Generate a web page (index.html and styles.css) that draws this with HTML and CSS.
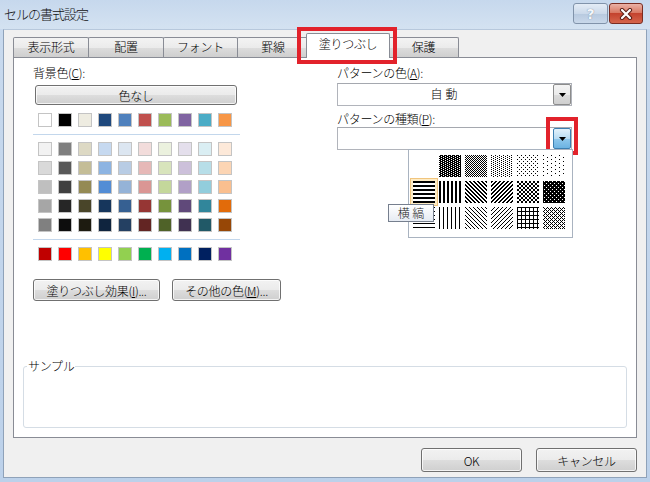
FILE: index.html
```html
<!DOCTYPE html>
<html lang="ja">
<head>
<meta charset="utf-8">
<title>セルの書式設定</title>
<link rel="stylesheet" href="styles.css">
</head>
<body>
<svg class="defs" width="0" height="0" aria-hidden="true">
  <defs>
    <pattern id="p75" width="4" height="2" patternUnits="userSpaceOnUse"><rect width="4" height="2" fill="#000"/><rect x="0" y="0" width="1" height="1" fill="#fff"/><rect x="2" y="1" width="1" height="1" fill="#fff"/></pattern>
    <pattern id="p50" width="2" height="2" patternUnits="userSpaceOnUse"><rect x="0" y="0" width="1" height="1" fill="#000"/><rect x="1" y="1" width="1" height="1" fill="#000"/></pattern>
    <pattern id="p25" width="4" height="2" patternUnits="userSpaceOnUse"><rect x="0" y="0" width="1" height="1" fill="#000"/><rect x="2" y="1" width="1" height="1" fill="#000"/></pattern>
    <pattern id="p12" width="4" height="4" patternUnits="userSpaceOnUse"><rect x="0" y="0" width="1" height="1" fill="#000"/><rect x="2" y="2" width="1" height="1" fill="#000"/></pattern>
    <pattern id="p6" width="8" height="4" patternUnits="userSpaceOnUse"><rect x="0" y="0" width="1" height="1" fill="#000"/><rect x="4" y="2" width="1" height="1" fill="#000"/></pattern>
    <pattern id="hs" width="4" height="4" patternUnits="userSpaceOnUse"><rect x="0" y="0" width="4" height="2" fill="#000"/></pattern>
    <pattern id="vs" width="4" height="4" patternUnits="userSpaceOnUse"><rect x="0" y="0" width="2" height="4" fill="#000"/></pattern>
    <pattern id="rd" width="4" height="4" patternUnits="userSpaceOnUse"><rect x="0" y="0" width="2" height="1" fill="#000"/><rect x="1" y="1" width="2" height="1" fill="#000"/><rect x="2" y="2" width="2" height="1" fill="#000"/><rect x="3" y="3" width="1" height="1" fill="#000"/><rect x="0" y="3" width="1" height="1" fill="#000"/></pattern>
    <pattern id="dd" width="4" height="4" patternUnits="userSpaceOnUse"><rect x="0" y="0" width="2" height="1" fill="#000"/><rect x="3" y="1" width="1" height="1" fill="#000"/><rect x="0" y="1" width="1" height="1" fill="#000"/><rect x="2" y="2" width="2" height="1" fill="#000"/><rect x="1" y="3" width="2" height="1" fill="#000"/></pattern>
    <pattern id="dc" width="4" height="4" patternUnits="userSpaceOnUse"><rect x="0" y="0" width="2" height="2" fill="#000"/><rect x="2" y="2" width="2" height="2" fill="#000"/></pattern>
    <pattern id="tdc" width="4" height="4" patternUnits="userSpaceOnUse"><rect width="4" height="4" fill="#000"/><rect x="1" y="0" width="1" height="1" fill="#fff"/><rect x="3" y="2" width="1" height="1" fill="#fff"/></pattern>
    <pattern id="ths" width="4" height="4" patternUnits="userSpaceOnUse"><rect x="0" y="0" width="4" height="1" fill="#000"/></pattern>
    <pattern id="tvs" width="4" height="4" patternUnits="userSpaceOnUse"><rect x="0" y="0" width="1" height="4" fill="#000"/></pattern>
    <pattern id="trd" width="4" height="4" patternUnits="userSpaceOnUse"><rect x="0" y="0" width="1" height="1" fill="#000"/><rect x="1" y="1" width="1" height="1" fill="#000"/><rect x="2" y="2" width="1" height="1" fill="#000"/><rect x="3" y="3" width="1" height="1" fill="#000"/></pattern>
    <pattern id="tdd" width="4" height="4" patternUnits="userSpaceOnUse"><rect x="3" y="0" width="1" height="1" fill="#000"/><rect x="2" y="1" width="1" height="1" fill="#000"/><rect x="1" y="2" width="1" height="1" fill="#000"/><rect x="0" y="3" width="1" height="1" fill="#000"/></pattern>
    <pattern id="thc" width="4" height="4" patternUnits="userSpaceOnUse"><rect x="0" y="0" width="4" height="1" fill="#000"/><rect x="0" y="0" width="1" height="4" fill="#000"/></pattern>
    <pattern id="tdx" width="4" height="4" patternUnits="userSpaceOnUse"><rect x="0" y="0" width="1" height="1" fill="#000"/><rect x="1" y="1" width="1" height="1" fill="#000"/><rect x="2" y="2" width="1" height="1" fill="#000"/><rect x="3" y="3" width="1" height="1" fill="#000"/><rect x="3" y="1" width="1" height="1" fill="#000"/><rect x="1" y="3" width="1" height="1" fill="#000"/></pattern>
  </defs>
</svg>

<div class="window">
  <div class="titlebar">
    <span class="title">セルの書式設定</span>
    <div class="caption-btns">
      <span class="cap help">?</span>
      <span class="cap close">
        <svg width="14" height="12" viewBox="0 0 14 12"><path d="M3 2 L11 10 M11 2 L3 10" stroke="#5a2018" stroke-width="4.2" stroke-linecap="round"/><path d="M3 2 L11 10 M11 2 L3 10" stroke="#fff" stroke-width="2.2" stroke-linecap="round"/></svg>
      </span>
    </div>
  </div>

  <div class="client">
    <div class="tabs">
      <div class="tab t1">表示形式</div>
      <div class="tab t2">配置</div>
      <div class="tab t3">フォント</div>
      <div class="tab t4">罫線</div>
      <div class="tab active">塗りつぶし<span class="callout tab-callout"></span></div>
      <div class="tab t6">保護</div>
    </div>

    <div class="panel">
      <div class="panel-grid">
        <div class="left-col">
          <div class="label">背景色(<u>C</u>):</div>
          <div class="btn btn-none">色なし</div>
          <div class="swatches theme">
            <span class="swatch" style="background:#FFFFFF"></span>
            <span class="swatch" style="background:#000000"></span>
            <span class="swatch" style="background:#EEECE1"></span>
            <span class="swatch" style="background:#1F497D"></span>
            <span class="swatch" style="background:#4F81BD"></span>
            <span class="swatch" style="background:#C0504D"></span>
            <span class="swatch" style="background:#9BBB59"></span>
            <span class="swatch" style="background:#8064A2"></span>
            <span class="swatch" style="background:#4BACC6"></span>
            <span class="swatch" style="background:#F79646"></span>
          </div>
          <div class="sep"></div>
          <div class="swatches tints">
            <span class="swatch" style="background:#F2F2F2"></span>
            <span class="swatch" style="background:#7F7F7F"></span>
            <span class="swatch" style="background:#DDD9C4"></span>
            <span class="swatch" style="background:#C6D9F0"></span>
            <span class="swatch" style="background:#DCE6F1"></span>
            <span class="swatch" style="background:#F2DCDB"></span>
            <span class="swatch" style="background:#EBF1DE"></span>
            <span class="swatch" style="background:#E4DFEC"></span>
            <span class="swatch" style="background:#DAEEF3"></span>
            <span class="swatch" style="background:#FDE9D9"></span>

            <span class="swatch" style="background:#D9D9D9"></span>
            <span class="swatch" style="background:#595959"></span>
            <span class="swatch" style="background:#C4BD97"></span>
            <span class="swatch" style="background:#8DB4E2"></span>
            <span class="swatch" style="background:#B8CCE4"></span>
            <span class="swatch" style="background:#E6B8B7"></span>
            <span class="swatch" style="background:#D8E4BC"></span>
            <span class="swatch" style="background:#CCC0DA"></span>
            <span class="swatch" style="background:#B7DEE8"></span>
            <span class="swatch" style="background:#FCD5B4"></span>

            <span class="swatch" style="background:#BFBFBF"></span>
            <span class="swatch" style="background:#404040"></span>
            <span class="swatch" style="background:#948A54"></span>
            <span class="swatch" style="background:#538DD5"></span>
            <span class="swatch" style="background:#95B3D7"></span>
            <span class="swatch" style="background:#DA9694"></span>
            <span class="swatch" style="background:#C4D79B"></span>
            <span class="swatch" style="background:#B1A0C7"></span>
            <span class="swatch" style="background:#92CDDC"></span>
            <span class="swatch" style="background:#FABF8F"></span>

            <span class="swatch" style="background:#A6A6A6"></span>
            <span class="swatch" style="background:#262626"></span>
            <span class="swatch" style="background:#494529"></span>
            <span class="swatch" style="background:#16365C"></span>
            <span class="swatch" style="background:#366092"></span>
            <span class="swatch" style="background:#963634"></span>
            <span class="swatch" style="background:#76933C"></span>
            <span class="swatch" style="background:#60497A"></span>
            <span class="swatch" style="background:#31869B"></span>
            <span class="swatch" style="background:#E26B0A"></span>

            <span class="swatch" style="background:#808080"></span>
            <span class="swatch" style="background:#0D0D0D"></span>
            <span class="swatch" style="background:#1D1B10"></span>
            <span class="swatch" style="background:#0F243E"></span>
            <span class="swatch" style="background:#244062"></span>
            <span class="swatch" style="background:#632523"></span>
            <span class="swatch" style="background:#4F6228"></span>
            <span class="swatch" style="background:#403151"></span>
            <span class="swatch" style="background:#215967"></span>
            <span class="swatch" style="background:#974706"></span>
          </div>
          <div class="sep"></div>
          <div class="swatches std">
            <span class="swatch" style="background:#C00000"></span>
            <span class="swatch" style="background:#FF0000"></span>
            <span class="swatch" style="background:#FFC000"></span>
            <span class="swatch" style="background:#FFFF00"></span>
            <span class="swatch" style="background:#92D050"></span>
            <span class="swatch" style="background:#00B050"></span>
            <span class="swatch" style="background:#00B0F0"></span>
            <span class="swatch" style="background:#0070C0"></span>
            <span class="swatch" style="background:#002060"></span>
            <span class="swatch" style="background:#7030A0"></span>
          </div>
          <div class="btn-row">
            <div class="btn btn-effect">塗りつぶし効果(<u>I</u>)...</div>
            <div class="btn btn-more">その他の色(<u>M</u>)...</div>
          </div>
        </div>

        <div class="right-col">
          <div class="label">パターンの色(<u>A</u>):</div>
          <div class="combo combo-color">
            <span class="combo-text">自動</span>
            <span class="dd"><svg width="7" height="4" viewBox="0 0 7 4"><path d="M0 0H7L3.5 4Z" fill="#000"/></svg></span>
          </div>
          <div class="label label-gap">パターンの種類(<u>P</u>):</div>
          <div class="combo combo-pattern">
            <span class="combo-text"></span>
            <span class="dd hot"><svg width="7" height="4" viewBox="0 0 7 4"><path d="M0 0H7L3.5 4Z" fill="#000"/></svg><span class="callout dd-callout"></span></span>
            <div class="popup">
              <div class="pat-grid">
                <span class="pat"></span>
                <span class="pat"><svg width="22" height="22"><rect width="22" height="22" fill="url(#p75)"/></svg></span>
                <span class="pat"><svg width="22" height="22"><rect width="22" height="22" fill="url(#p50)"/></svg></span>
                <span class="pat"><svg width="22" height="22"><rect width="22" height="22" fill="url(#p25)"/></svg></span>
                <span class="pat"><svg width="22" height="22"><rect width="22" height="22" fill="url(#p12)"/></svg></span>
                <span class="pat"><svg width="22" height="22"><rect width="22" height="22" fill="url(#p6)"/></svg></span>

                <span class="pat selected"><svg width="22" height="22"><rect width="22" height="22" fill="url(#hs)"/></svg></span>
                <span class="pat"><svg width="22" height="22"><rect width="22" height="22" fill="url(#vs)"/></svg></span>
                <span class="pat"><svg width="22" height="22"><rect width="22" height="22" fill="url(#rd)"/></svg></span>
                <span class="pat"><svg width="22" height="22"><rect width="22" height="22" fill="url(#dd)"/></svg></span>
                <span class="pat"><svg width="22" height="22"><rect width="22" height="22" fill="url(#dc)"/></svg></span>
                <span class="pat"><svg width="22" height="22"><rect width="22" height="22" fill="url(#tdc)"/></svg></span>

                <span class="pat"><svg width="22" height="22"><rect width="22" height="22" fill="url(#ths)"/></svg></span>
                <span class="pat"><svg width="22" height="22"><rect width="22" height="22" fill="url(#tvs)"/></svg></span>
                <span class="pat"><svg width="22" height="22"><rect width="22" height="22" fill="url(#trd)"/></svg></span>
                <span class="pat"><svg width="22" height="22"><rect width="22" height="22" fill="url(#tdd)"/></svg></span>
                <span class="pat"><svg width="22" height="22"><rect width="22" height="22" fill="url(#thc)"/></svg></span>
                <span class="pat"><svg width="22" height="22"><rect width="22" height="22" fill="url(#tdx)"/></svg></span>
              </div>
              <div class="tooltip">横 縞</div>
            </div>
          </div>
        </div>
      </div>

      <div class="sample">
        <span class="sample-label">サンプル</span>
      </div>
    </div>

    <div class="footer">
      <div class="btn btn-foot">OK</div>
      <div class="btn btn-foot">キャンセル</div>
    </div>
  </div>
</div>
</body>
</html>
```

FILE: styles.css
```css
html, body {
  margin: 0;
  padding: 0;
  background: #f0f0f0;
}

body {
  font-family: "Noto Sans CJK JP", "Noto Sans", sans-serif;
  font-size: 12px;
  font-weight: 300;
  color: #000;
}

.defs {
  display: block;
  width: 0;
  height: 0;
  overflow: hidden;
}

.window {
  width: 650px;
  height: 482px;
  box-sizing: border-box;
  padding: 0 3px 4px;
  background: linear-gradient(#c9daee, #bcd1ea);
  display: flex;
  flex-direction: column;
}

/* ---------- title bar ---------- */
.titlebar {
  height: 29px;
  flex: none;
  margin: 0 -3px;
  padding: 0 7px 0 4px;
  display: flex;
  justify-content: space-between;
  align-items: flex-start;
  background: linear-gradient(#c6d8ed, #d4e2f1);
}

.title {
  margin-top: 5px;
  font-size: 13px;
  line-height: 18px;
  letter-spacing: -1px;
  color: #111;
}

.caption-btns {
  display: flex;
  gap: 1px;
  margin-top: 3px;
}

.cap {
  height: 21px;
  box-sizing: border-box;
  border-radius: 3px;
  display: flex;
  align-items: center;
  justify-content: center;
}

.help {
  width: 35px;
  border: 1px solid #8193aa;
  background: linear-gradient(#e4ecf6, #cbd9ea 50%, #b7c9df 51%, #c9d8ea);
  color: #f4f7fb;
  font-family: "DejaVu Sans", sans-serif;
  font-weight: bold;
  font-size: 14px;
  line-height: 16px;
  text-shadow: 0 0 1px #5b6b82;
}

.close {
  width: 34px;
  border: 1px solid #7a2d22;
  background: linear-gradient(#eab2a6, #d97a65 45%, #c4432e 50%, #d5654c);
}

/* ---------- client ---------- */
.client {
  flex: 1;
  box-sizing: border-box;
  background: #f0f0f0;
  border: 1px solid #8fa2b9;
  border-top-color: #b7c8dc;
  padding: 3px 9px 0;
  display: flex;
  flex-direction: column;
}

.tabs {
  display: flex;
  align-items: flex-end;
  height: 24px;
  position: relative;
  z-index: 1;
}

.tab {
  height: 20px;
  box-sizing: border-box;
  border: 1px solid #898c95;
  border-bottom: none;
  border-radius: 2px 2px 0 0;
  background: linear-gradient(#f3f3f3, #ebebeb 50%, #dddddd 51%, #cfcfcf);
  text-align: center;
  line-height: 18px;
  margin-right: -1px;
  letter-spacing: -0.3px;
  white-space: nowrap;
}

.t1 { width: 76px; }
.t2 { width: 76px; }
.t3 { width: 75px; }
.t4 { width: 72px; }
.t6 { width: 71px; }

.tab.active {
  width: 84px;
  height: 25px;
  margin: 0 -2px -1px -2px;
  background: #fff;
  line-height: 20px;
  position: relative;
  z-index: 2;
}

.callout {
  position: absolute;
  box-sizing: border-box;
  border: 4px solid #e2222b;
  pointer-events: none;
}

.tab-callout {
  left: -10px;
  top: -7px;
  width: 100px;
  height: 37px;
}

/* ---------- panel ---------- */
.panel {
  height: 381px;
  flex: none;
  box-sizing: border-box;
  border: 1px solid #898c95;
  background: #fff;
  display: flex;
  flex-direction: column;
}

.panel-grid {
  display: grid;
  grid-template-columns: 304px 235px;
  align-items: start;
  padding: 7px 0 0 19px;
}

.label {
  height: 16px;
  line-height: 16px;
  white-space: nowrap;
  letter-spacing: -0.3px;
}

.btn {
  box-sizing: border-box;
  border: 1px solid #707070;
  border-radius: 3px;
  background: linear-gradient(#f2f2f2, #ebebeb 50%, #dddddd 51%, #cfcfcf);
  box-shadow: inset 0 0 0 1px rgba(255, 255, 255, 0.75);
  display: flex;
  align-items: center;
  justify-content: center;
  white-space: nowrap;
  color: #000;
  letter-spacing: -0.3px;
}

.btn-none {
  width: 202px;
  height: 20px;
  margin: 4px 0 0 2px;
}

.swatches {
  display: grid;
  grid-template-columns: repeat(10, 14px);
  column-gap: 6px;
  row-gap: 5px;
  padding-left: 5px;
}

.swatch {
  width: 14px;
  height: 14px;
  box-sizing: border-box;
  border: 1px solid #c4c4c4;
}

.theme { margin-top: 8px; }
.tints { margin-top: 7px; }
.std { margin-top: 7px; }

.sep {
  width: 207px;
  height: 1px;
  margin-top: 7px;
  background: #c3d7ec;
}

.btn-row {
  display: flex;
  gap: 12px;
  margin-top: 18px;
}

.btn-effect { width: 127px; height: 22px; }
.btn-more { width: 109px; height: 22px; }

/* ---------- right column ---------- */
.combo {
  height: 23px;
  box-sizing: border-box;
  border: 1px solid #b1b4bb;
  border-top-color: #a5a8af;
  background: #fff;
  display: flex;
  position: relative;
}

.combo-color { margin-top: 2px; }
.label-gap { margin-top: 5px; }

.combo-text {
  flex: 1;
  text-align: center;
  line-height: 20px;
  letter-spacing: 3px;
}

.dd {
  width: 18px;
  box-sizing: border-box;
  border: 1px solid #8c8c8c;
  border-radius: 2px;
  background: linear-gradient(#f4f4f4, #ebebeb 50%, #dcdcdc 51%, #cfcfcf);
  display: flex;
  align-items: center;
  justify-content: center;
  position: relative;
}

.dd svg { display: block; }

.dd.hot {
  border-color: #3c7fb1;
  background: linear-gradient(#e3f2fb, #b8dcf3 50%, #8fc8ec 51%, #6cb3e2);
}

.dd-callout {
  left: -8px;
  top: -12px;
  width: 32px;
  height: 38px;
}

.popup {
  position: absolute;
  left: 70px;
  top: 21px;
  width: 165px;
  height: 89px;
  box-sizing: border-box;
  border: 1px solid #a9b3c0;
  background: #fff;
  padding: 5px 0 0 4px;
  z-index: 3;
}

.pat-grid {
  display: grid;
  grid-template-columns: repeat(6, 22px);
  grid-auto-rows: 22px;
  column-gap: 4px;
  row-gap: 4px;
}

.pat {
  width: 22px;
  height: 22px;
  background: #fff;
}

.pat svg {
  display: block;
  shape-rendering: crispEdges;
}

.pat.selected {
  box-shadow: 0 0 0 2px #fdebc4, 0 0 0 3px #f1c57e;
}

.tooltip {
  position: absolute;
  left: -21px;
  top: 54px;
  width: 46px;
  height: 18px;
  box-sizing: border-box;
  border: 1px solid #767f8e;
  background: linear-gradient(#ffffff, #e6ebf3);
  line-height: 16px;
  text-align: center;
  color: #222;
  white-space: nowrap;
}

/* ---------- sample ---------- */
.sample {
  margin: auto 9px 9px 9px;
  height: 62px;
  box-sizing: border-box;
  border: 1px solid #d5dde5;
  border-radius: 3px;
  position: relative;
}

.sample-label {
  position: absolute;
  left: 3px;
  top: -9px;
  padding: 0 1px;
  background: #fff;
  line-height: 16px;
  letter-spacing: -0.3px;
}

/* ---------- footer ---------- */
.footer {
  display: flex;
  justify-content: flex-end;
  gap: 14px;
  margin-top: 10px;
}

.btn-foot {
  width: 101px;
  height: 24px;
}
```
